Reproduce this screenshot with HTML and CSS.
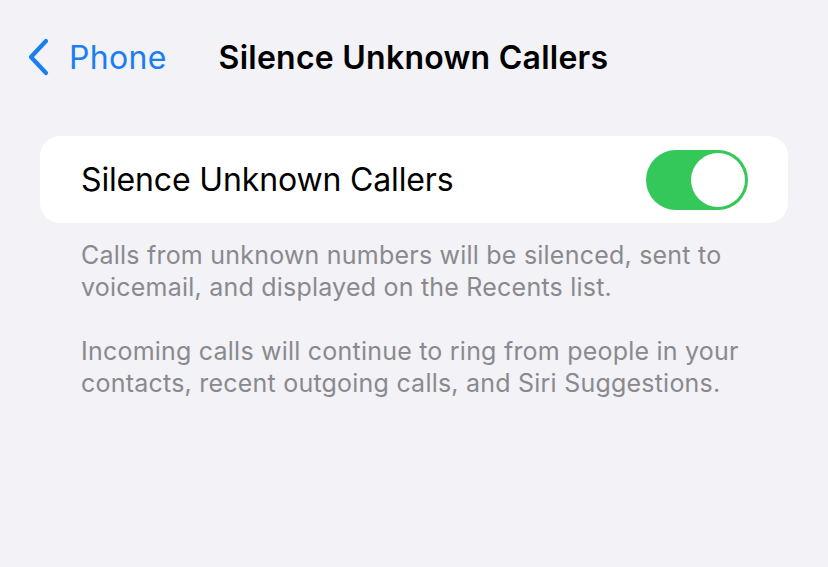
FILE: index.html
```html
<!DOCTYPE html>
<html>
<head>
<meta charset="utf-8">
<link rel="stylesheet" href="styles.css">
</head>
<body>
<div class="screen">
  <header class="nav">
    <a class="back">
      <svg class="chev" width="24" height="38" viewBox="0 0 24 38"><path d="M20 3 L5 19 L20 35" fill="none" stroke="#1a7ef0" stroke-width="4.2" stroke-linecap="round" stroke-linejoin="round"/></svg>
      <span class="back-label">Phone</span>
    </a>
    <h1 class="title">Silence Unknown Callers</h1>
  </header>
  <section class="card">
    <span class="row-label">Silence Unknown Callers</span>
    <div class="toggle on"><div class="knob"></div></div>
  </section>
  <div class="footer">
    <p>Calls from unknown numbers will be silenced, sent to voicemail, and displayed on the Recents list.</p>
    <p>Incoming calls will continue to ring from people in your contacts, recent outgoing calls, and Siri Suggestions.</p>
  </div>
</div>
</body>
</html>
```
FILE: styles.css
```css
html, body { margin: 0; padding: 0; }
body {
  background: #f2f2f7;
  font-family: Inter, "Noto Sans", sans-serif;
  width: 828px;
  height: 567px;
  overflow: hidden;
}
.screen { padding: 0 40px; }
.nav {
  display: flex;
  align-items: center;
  height: 80px;
  padding-top: 34px;
  box-sizing: border-box;
  margin-left: -14px;
}
.back {
  display: flex;
  align-items: center;
  gap: 19px;
  color: #1a7ef0;
}
.back-label { font-size: 32px; letter-spacing: 0.3px; }
.title {
  margin: 0 0 0 52px;
  font-size: 32px;
  font-weight: 600;
  color: #000;
  letter-spacing: 0.25px;
}
.card {
  margin-top: 56px;
  background: #fff;
  border-radius: 20px;
  height: 87px;
  display: flex;
  align-items: center;
  justify-content: space-between;
  padding: 0 40px 0 41px;
}
.row-label { font-size: 32px; color: #000; letter-spacing: -0.15px; }
.toggle {
  width: 102px;
  height: 60px;
  border-radius: 30px;
  background: #34c759;
  position: relative;
}
.knob {
  position: absolute;
  right: 3px;
  top: 3px;
  width: 54px;
  height: 54px;
  border-radius: 50%;
  background: #fff;
}
.footer {
  padding: 16px 41px 0;
  color: #8a8a8e;
  font-size: 25px;
  letter-spacing: 0.22px;
  line-height: 32px;
}
.footer p { margin: 0 0 32px; }
```
